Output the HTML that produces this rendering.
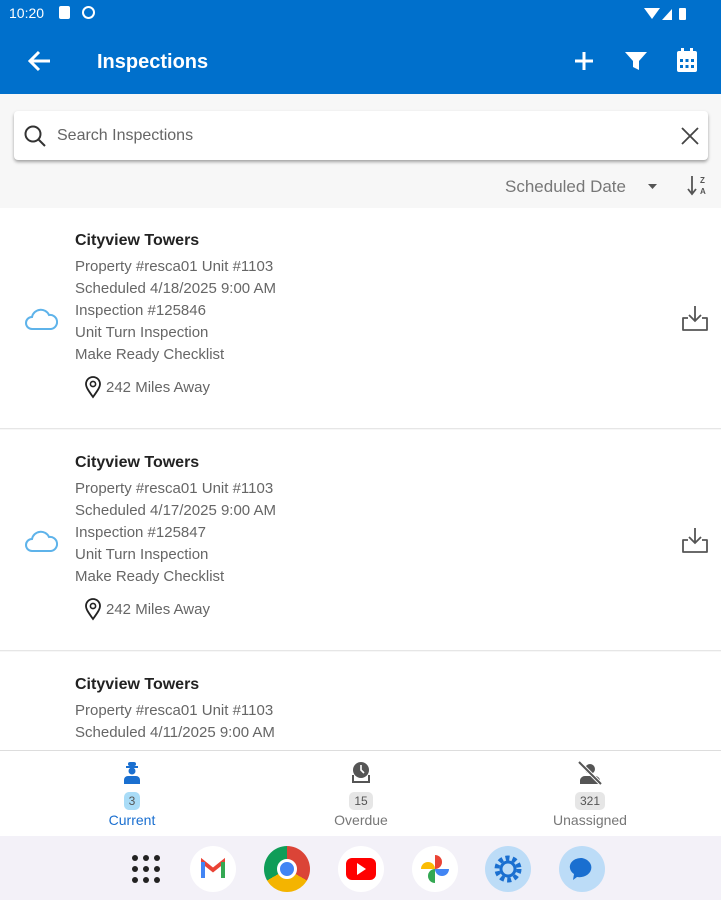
<!DOCTYPE html>
<html><head><meta charset="utf-8"><style>
*{margin:0;padding:0;box-sizing:border-box}
body{width:721px;height:900px;overflow:hidden;font-family:"Liberation Sans",sans-serif;background:#f7f7f7;position:relative}
.abs{position:absolute}
.top{left:0;top:0;width:721px;height:94px;background:#0070cc;color:#fff}
.item{left:0;width:721px;height:221px;background:#fff;border-bottom:1px solid #e6e6e6}
.t{position:absolute;left:75px;font-size:16px;font-weight:bold;color:#222}
.l{position:absolute;left:75px;font-size:15px;color:#666;line-height:22px}
.nav{left:0;top:750px;width:721px;height:86px;background:#fff;border-top:1px solid #ddd}
.tab{position:absolute;top:0;width:120px;text-align:center;font-size:14px;color:#777}
.badge{display:inline-block;padding:2px 5px;border-radius:5px;font-size:12px;background:#e6e6e6;color:#555}
.dock{left:0;top:836px;width:721px;height:64px;background:#f3f1f8}
.ic{position:absolute;top:846px;width:46px;height:46px;border-radius:50%;background:#fff}
</style></head><body>
<div class="abs top">
 <div class="abs" style="left:9px;top:5px;font-size:14px">10:20</div>
 <div class="abs" style="left:59px;top:6px;width:11px;height:13px;background:#fff;border-radius:2px"></div>
 <div class="abs" style="left:82px;top:6px;width:13px;height:13px;border:2px solid #fff;border-radius:50%"></div>
 <svg class="abs" style="left:644px;top:5px" width="50" height="16"><path d="M0 3 L16 3 L8 14Z" fill="#fff"/><path d="M18 15 L28 4 L28 15Z" fill="#fff"/><rect x="35" y="3" width="7" height="12" rx="1" fill="#fff"/></svg>
 <svg class="abs" style="left:26px;top:49px" width="28" height="24"><path d="M24 12H4M13 3L4 12L13 21" stroke="#fff" stroke-width="3" fill="none"/></svg>
 <div class="abs" style="left:97px;top:51px;font-size:20px;font-weight:bold">Inspections</div>
 <svg class="abs" style="left:573px;top:50px" width="22" height="22"><path d="M11 2V20M2 11H20" stroke="#fff" stroke-width="3"/></svg>
 <svg class="abs" style="left:624px;top:50px" width="24" height="22"><path d="M1 2H23L15 11V20L9 17V11Z" fill="#fff"/></svg>
 <svg class="abs" style="left:676px;top:47px" width="22" height="26"><rect x="1" y="4" width="20" height="21" rx="2" fill="#fff"/><rect x="5" y="1" width="3" height="5" fill="#fff"/><rect x="14" y="1" width="3" height="5" fill="#fff"/><g fill="#0070cc"><rect x="4" y="12" width="3" height="3"/><rect x="9.5" y="12" width="3" height="3"/><rect x="15" y="12" width="3" height="3"/><rect x="4" y="18" width="3" height="3"/><rect x="9.5" y="18" width="3" height="3"/><rect x="15" y="18" width="3" height="3"/></g></svg>
</div>
<div class="abs" style="left:14px;top:111px;width:694px;height:49px;background:#fff;border-radius:4px;box-shadow:0 2px 3px rgba(0,0,0,.35)">
 <svg class="abs" style="left:9px;top:13px" width="24" height="24"><circle cx="10" cy="10" r="7.5" stroke="#333" stroke-width="2" fill="none"/><path d="M15.5 15.5L22 22" stroke="#333" stroke-width="2"/></svg>
 <div class="abs" style="left:43px;top:16px;font-size:16px;color:#666">Search Inspections</div>
 <svg class="abs" style="left:667px;top:16px" width="18" height="18"><path d="M1 1L17 17M17 1L1 17" stroke="#444" stroke-width="1.8"/></svg>
</div>
<div class="abs" style="left:505px;top:177px;font-size:17px;color:#777">Scheduled Date</div>
<svg class="abs" style="left:648px;top:184px" width="10" height="6"><path d="M0 0H9L4.5 5Z" fill="#555"/></svg>
<svg class="abs" style="left:686px;top:174px" width="24" height="24"><path d="M6 2V19M2 15L6 20L10 15" stroke="#555" stroke-width="1.8" fill="none"/><text x="14" y="9" font-size="8" font-weight="bold" fill="#555" font-family="Liberation Sans">Z</text><text x="14" y="20" font-size="8" font-weight="bold" fill="#555" font-family="Liberation Sans">A</text></svg>

<div class="abs item" style="top:208px">
 <div class="t" style="top:24px">Cityview Towers</div>
 <div class="l" style="top:48px">Property #resca01 Unit #1103<br>Scheduled 4/18/2025 9:00 AM<br>Inspection #125846<br>Unit Turn Inspection<br>Make Ready Checklist</div>
 <svg class="abs" style="left:84px;top:167px" width="20" height="24"><path d="M9 22C4 15 2 12 2 9A7 7 0 0 1 16 9C16 12 14 15 9 22Z" stroke="#222" stroke-width="1.8" fill="none"/><circle cx="9" cy="9" r="2.6" stroke="#222" stroke-width="1.6" fill="none"/></svg>
 <div class="l" style="left:106px;top:169px">242 Miles Away</div>
 <svg class="abs" style="left:24px;top:98px" width="34" height="26"><path d="M8 23A6 6 0 0 1 8 11A9 9 0 0 1 25 9A7 7 0 0 1 27 23Z" stroke="#5eb3ea" stroke-width="2" fill="none"/></svg>
 <svg class="abs" style="left:680px;top:96px" width="30" height="30"><path d="M15 2V17M9 11L15 17L21 11" stroke="#555" stroke-width="1.8" fill="none"/><path d="M8 14H3V26H27V14H22" stroke="#555" stroke-width="1.8" fill="none" stroke-linejoin="round"/></svg>
</div>
<div class="abs item" style="top:430px">
 <div class="t" style="top:24px">Cityview Towers</div>
 <div class="l" style="top:48px">Property #resca01 Unit #1103<br>Scheduled 4/17/2025 9:00 AM<br>Inspection #125847<br>Unit Turn Inspection<br>Make Ready Checklist</div>
 <svg class="abs" style="left:84px;top:167px" width="20" height="24"><path d="M9 22C4 15 2 12 2 9A7 7 0 0 1 16 9C16 12 14 15 9 22Z" stroke="#222" stroke-width="1.8" fill="none"/><circle cx="9" cy="9" r="2.6" stroke="#222" stroke-width="1.6" fill="none"/></svg>
 <div class="l" style="left:106px;top:169px">242 Miles Away</div>
 <svg class="abs" style="left:24px;top:98px" width="34" height="26"><path d="M8 23A6 6 0 0 1 8 11A9 9 0 0 1 25 9A7 7 0 0 1 27 23Z" stroke="#5eb3ea" stroke-width="2" fill="none"/></svg>
 <svg class="abs" style="left:680px;top:96px" width="30" height="30"><path d="M15 2V17M9 11L15 17L21 11" stroke="#555" stroke-width="1.8" fill="none"/><path d="M8 14H3V26H27V14H22" stroke="#555" stroke-width="1.8" fill="none" stroke-linejoin="round"/></svg>
</div>
<div class="abs item" style="top:652px;height:100px">
 <div class="t" style="top:24px">Cityview Towers</div>
 <div class="l" style="top:48px">Property #resca01 Unit #1103<br>Scheduled 4/11/2025 9:00 AM</div>
</div>

<div class="abs nav">
 <div class="tab" style="left:72px;color:#1a6fd0">
  <svg style="margin-top:10px" width="20" height="24"><rect x="6" y="1" width="8" height="4" rx="2" fill="#1a6fd0"/><rect x="4" y="5" width="12" height="2" fill="#1a6fd0"/><circle cx="10" cy="10" r="3.5" fill="#1a6fd0"/><path d="M2 23V19A4 4 0 0 1 6 15H14A4 4 0 0 1 18 19V23Z" fill="#1a6fd0"/></svg>
  <div style="margin-top:4px"><span class="badge" style="background:#a9dcf7;color:#555">3</span></div>
  <div style="margin-top:2px">Current</div></div>
 <div class="tab" style="left:301px">
  <svg style="margin-top:10px" width="22" height="24"><circle cx="11" cy="9" r="8" fill="#555"/><path d="M11 4V9L14 12" stroke="#fff" stroke-width="1.6" fill="none"/><path d="M3 14V21H19V14" stroke="#555" stroke-width="2" fill="none"/></svg>
  <div style="margin-top:4px"><span class="badge">15</span></div>
  <div style="margin-top:2px">Overdue</div></div>
 <div class="tab" style="left:530px">
  <svg style="margin-top:10px" width="26" height="24"><circle cx="13" cy="8" r="5" fill="#555"/><path d="M3 23V19A5 5 0 0 1 8 15H18A5 5 0 0 1 23 19V23Z" fill="#555"/><path d="M2 1L24 23" stroke="#fff" stroke-width="4"/><path d="M2 1L24 23" stroke="#555" stroke-width="2"/></svg>
  <div style="margin-top:4px"><span class="badge">321</span></div>
  <div style="margin-top:2px">Unassigned</div></div>
</div>
<div class="abs dock"></div>
<svg class="abs" style="left:131px;top:854px" width="30" height="30" fill="#222"><circle cx="4" cy="4" r="3"/><circle cx="15" cy="4" r="3"/><circle cx="26" cy="4" r="3"/><circle cx="4" cy="15" r="3"/><circle cx="15" cy="15" r="3"/><circle cx="26" cy="15" r="3"/><circle cx="4" cy="26" r="3"/><circle cx="15" cy="26" r="3"/><circle cx="26" cy="26" r="3"/></svg>
<div class="ic" style="left:190px"><svg width="46" height="46"><path d="M13 32V16L23 24L33 16V32" stroke="#ea4335" stroke-width="4" fill="none"/><path d="M13 16V32" stroke="#4285f4" stroke-width="4"/><path d="M33 16V32" stroke="#34a853" stroke-width="4"/></svg></div>
<div class="ic" style="left:264px;background:conic-gradient(#db4437 0 120deg,#f4b400 120deg 240deg,#0f9d58 240deg)"><div style="position:absolute;left:13px;top:13px;width:20px;height:20px;border-radius:50%;background:#4285f4;border:3px solid #fff"></div></div>
<div class="ic" style="left:338px"><div style="position:absolute;left:8px;top:12px;width:30px;height:22px;background:#f00;border-radius:6px"></div><svg class="abs" style="left:19px;top:17px" width="10" height="12"><path d="M0 0L9 6L0 12Z" fill="#fff"/></svg></div>
<div class="ic" style="left:412px"><svg width="46" height="46"><path d="M23 23V9A7 7 0 0 1 23 23Z" fill="#ea4335"/><path d="M23 23H37A7 7 0 0 1 23 23Z" fill="#4285f4"/><path d="M23 23V37A7 7 0 0 1 23 23Z" fill="#34a853"/><path d="M23 23H9A7 7 0 0 1 23 23Z" fill="#fbbc04"/></svg></div>
<div class="ic" style="left:485px;background:#bcdcf7"><svg width="46" height="46"><circle cx="23" cy="23" r="11" stroke="#1a6fd0" stroke-width="5" fill="none" stroke-dasharray="4 3"/><circle cx="23" cy="23" r="7" stroke="#1a6fd0" stroke-width="3" fill="none"/></svg></div>
<div class="ic" style="left:559px;background:#bcdcf7"><svg width="46" height="46"><path d="M23 12A11 9 0 1 1 18 31L14 34L15 28A11 9 0 0 1 23 12Z" fill="#1a6fd0"/></svg></div>
</body></html>
